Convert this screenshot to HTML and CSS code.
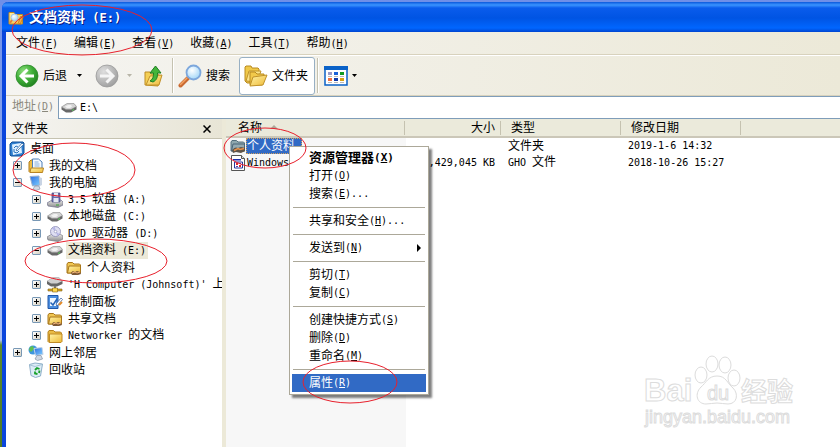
FILE: index.html
```html
<!DOCTYPE html>
<html lang="zh-CN">

<head>
    <meta charset="UTF-8">
    <title>文档资料 (E:)</title>
    <link rel="stylesheet" href="styles.css">
</head>

<body>
    <svg class="sprite" width="0" height="0" aria-hidden="true">
        <defs>
            <linearGradient id="yellow" x1="0" y1="0" x2="1" y2="1">
                <stop offset="0" stop-color="#fff3a6" />
                <stop offset="1" stop-color="#eeb937" />
            </linearGradient>
            <linearGradient id="metal" x1="0" y1="0" x2="0" y2="1">
                <stop offset="0" stop-color="#e8e8e8" />
                <stop offset="1" stop-color="#8a8a8a" />
            </linearGradient>
            <radialGradient id="green" cx="0.35" cy="0.3" r="0.8">
                <stop offset="0" stop-color="#8fe07e" />
                <stop offset="0.5" stop-color="#3fae38" />
                <stop offset="1" stop-color="#1c7a1c" />
            </radialGradient>
            <radialGradient id="grey" cx="0.35" cy="0.3" r="0.8">
                <stop offset="0" stop-color="#dedede" />
                <stop offset="1" stop-color="#9a9a9a" />
            </radialGradient>
            <radialGradient id="glass" cx="0.4" cy="0.35" r="0.7">
                <stop offset="0" stop-color="#ffffff" />
                <stop offset="1" stop-color="#9cd4f8" />
            </radialGradient>
            <linearGradient id="screen" x1="0" y1="0" x2="1" y2="1">
                <stop offset="0" stop-color="#2a6be0" />
                <stop offset="1" stop-color="#7fd0ff" />
            </linearGradient>
        </defs>
        <symbol id="folder" viewBox="0 0 16 16">
            <path d="M1 4 2 2.500h4.500L8 4h5.500l1 1v8.500l-1 1H2l-1-1z" fill="#e9bb45" stroke="#b5801d" />
            <path d="M2.500 6H15v7.500l-1 1H2.500z" fill="url(#yellow)" stroke="#c08a24" />
        </symbol>
        <symbol id="shared" viewBox="0 0 16 16">
            <path d="M1 4 2 2.500h4.500L8 4h5.500l1 1v8H1z" fill="#f0c652" stroke="#a9771c" />
            <path d="M3 6h11.500v7H1.500z" fill="url(#yellow)" stroke="#a9771c" />
            <path d="M5 13c1-2 2-2 4-1l2-1 3 1 1 2-3 1H6z" fill="#7a5634" />
            <path d="M6 13l3-1 2 1 3-1" fill="none" stroke="#f0b277" />
        </symbol>
        <symbol id="shared-selected" viewBox="0 0 16 16">
            <path d="M1 4 2 2.500h4.500L8 4h5.500l1 1v8H1z" fill="#8ea7ae" stroke="#54707e" />
            <path d="M3 6h11.500v7H1.500z" fill="#93aab2" stroke="#4b6578" />
            <path d="M2 12c3-3 4-3 6-2l3-1 4 1v3l-4 2-5-1-3 1z" fill="#5e5348" />
            <path d="M4 12.500l4-2 2 1 4-1" fill="none" stroke="#e8924c" stroke-width="1.500" />
        </symbol>
        <symbol id="search-folder" viewBox="0 0 16 16">
            <path d="M1 2.500h5l1 2h7.500V14H1z" fill="url(#yellow)" stroke="#c08a24" />
            <path d="M12 14.500l3.500-8h-3l-2 6z" fill="#f5b040" stroke="#c06a18" stroke-width=".7" />
            <circle cx="6.500" cy="7.500" r="3.500" fill="url(#glass)" stroke="#a8c4e0" />
            <path d="M4 10l-2 3" stroke="#e0853c" stroke-width="2" />
        </symbol>
        <symbol id="desktop" viewBox="0 0 16 16">
            <path d="M3 1h11l1 1v10l-3 3H2l-1-1V3z" fill="#2f7fd0" stroke="#124f95" />
            <path d="M3 3.500 12 2l1 10-9 2z" fill="#dff0ff" />
            <path d="M5 7l2-2 2 1M5 8v3l3 1 2-2" fill="none" stroke="#2b73bd" />
            <path d="M7 9l6-7 1.500 1.500L8 10z" fill="#f7fbff" stroke="#2d5e9b" stroke-width=".7" />
        </symbol>
        <symbol id="documents" viewBox="0 0 16 16">
            <path d="M1 4 3 2h3v12.500H2l-1-1z" fill="#efbd45" stroke="#b07c1c" />
            <path d="M4.500 1h6L14 4v8H4.500z" fill="#f5faff" stroke="#4d7fb8" />
            <path d="M6.500 4h4M6.500 6h5M6.500 8h5" stroke="#86aedb" />
            <path d="M3 10h12.500l-1 4.500H2z" fill="url(#yellow)" stroke="#b98423" />
        </symbol>
        <symbol id="computer" viewBox="0 0 16 16">
            <path d="M2 1.500 11 1l1 9-7.500 1z" fill="url(#screen)" stroke="#9ab0ce" />
            <path d="M11 2l3 1v7l-2 1z" fill="#c9d4e4" />
            <path d="M7 11h4l1 3-4 1.500L5 14z" fill="#d5dbe4" stroke="#8796aa" stroke-width=".7" />
        </symbol>
        <symbol id="floppy" viewBox="0 0 16 16">
            <path d="M0 11l5-3h9l2 2v3l-5 2.500L1 14z" fill="url(#metal)" stroke="#70708c" stroke-width=".7" />
            <path d="M5 1h8v9H5z" fill="#6a6eae" stroke="#464880" stroke-width=".7" />
            <path d="M7 1h4v3.500H7zM6.500 6h5v4h-5z" fill="#e4e7f3" />
            <path d="M9 13h3" stroke="#34a834" />
        </symbol>
        <symbol id="drive" viewBox="0 0 16 16">
            <path d="M.5 7.500 6 4h7l2.500 3v2.500L10 12.500H5L.5 9.500z" fill="#686868" />
            <path d="M.5 7 6 3.500h7l2.500 3L10 9.500H5z" fill="#d4d4d4" stroke="#888" stroke-width=".6" />
            <path d="M4 6.500 7 5h3l1 1.500L9 8H6z" fill="#f2f2f2" />
            <path d="M11 10.500l2-1" stroke="#55d055" />
        </symbol>
        <symbol id="dvd" viewBox="0 0 16 16">
            <path d="M0 11l5-3h8l3 2v3l-5 2.500L1 14z" fill="url(#metal)" stroke="#77777f" stroke-width=".7" />
            <circle cx="8.500" cy="5.500" r="5" fill="#dfdff2" stroke="#8a8ab4" stroke-width=".8" />
            <path d="M8.500 5.500 5 2.500l3-2zM8.500 5.500l4 2.500-2 2z" fill="#b5b5e6" />
            <circle cx="8.500" cy="5.500" r="1.300" fill="#fff" stroke="#8a8ab4" stroke-width=".6" />
        </symbol>
        <symbol id="net-drive" viewBox="0 0 16 16">
            <path d="M0 4 6 .5h6L15.500 4v3L10 9.500H4L0 7z" fill="#666" />
            <path d="M0 4 6 .5h6L15.500 4 10 6.500H4z" fill="#cfcfcf" />
            <path d="M7 9h2v3H7z" fill="#7a7a7a" />
            <path d="M1 12h14v2H1z" fill="#d9a820" stroke="#806018" stroke-width=".6" />
            <path d="M5.500 11h5v4h-5z" fill="#ffd84c" stroke="#806018" stroke-width=".6" />
        </symbol>
        <symbol id="control" viewBox="0 0 16 16">
            <path d="M1 1.500h10v13H1z" fill="#4c8fe0" stroke="#1f56a8" />
            <path d="M3 4h6v8H3z" fill="#eef6ff" />
            <path d="M3.500 8.500 6 11l4-6" fill="none" stroke="#2563b6" stroke-width="1.500" />
            <path d="M9 10l5-6 1.500 1.500L10 12z" fill="#fff" stroke="#2c569a" stroke-width=".7" />
            <path d="M12 11l3-3" stroke="#e38b2a" stroke-width="2" />
        </symbol>
        <symbol id="network" viewBox="0 0 16 16">
            <circle cx="5" cy="5" r="4.500" fill="#3c96dd" />
            <path d="M2 2l3-1 1 3-3 3-2-2z" fill="#5fc04e" />
            <path d="M6 3.500 14 2.500l1 7-7.500 1z" fill="url(#screen)" stroke="#c2d2e6" />
            <path d="M9 10.500h4l1.500 3.500-5 1.500L7 14z" fill="#cfd7e2" stroke="#8592a5" stroke-width=".7" />
        </symbol>
        <symbol id="recycle" viewBox="0 0 16 16">
            <path d="M1.500 2.500 7 1l7.500 1-2 12-5 1.500L3 13.500z" fill="#dcecf6" stroke="#8eafc8" />
            <path d="M2 3l5 1.500 7-2" fill="none" stroke="#a5c2d6" />
            <path d="M7 8l2-2 2.500 1M11.500 8.500 11 11M9.500 12 7 11.500V9.500" fill="none" stroke="#18a22c" stroke-width="1.800" />
        </symbol>
        <symbol id="ghost" viewBox="0 0 16 16">
            <path d="M1.500.5h10l3 3v12h-13z" fill="#fff" stroke="#555" />
            <path d="M11.500.5v3h3" fill="#ddd" stroke="#555" />
            <path d="M3 4h8v1.500H3z" fill="#1d2fa8" />
            <path d="M4.500 7h8v6h-8z" fill="#fff" stroke="#24369c" />
            <path d="M6 8h2v2H6zM9 10h2v2H9z" fill="#e2252c" />
            <path d="M9 8h2v1H9zM6 11h2v1H6z" fill="#5b3fa8" />
        </symbol>
        <symbol id="caret" viewBox="0 0 5 3">
            <path d="M0 0h5L2.500 3z" />
        </symbol>
    </svg>

    <div class="window">
        <header class="title-bar">
            <svg class="icon"><use href="#search-folder" /></svg>
            <h1>文档资料<span class="en"> (E:)</span></h1>
        </header>

        <nav class="menu-bar">
            <button>文件<span class="en">(<u>F</u>)</span></button>
            <button>编辑<span class="en">(<u>E</u>)</span></button>
            <button>查看<span class="en">(<u>V</u>)</span></button>
            <button>收藏<span class="en">(<u>A</u>)</span></button>
            <button>工具<span class="en">(<u>T</u>)</span></button>
            <button>帮助<span class="en">(<u>H</u>)</span></button>
        </nav>

        <div class="toolbar">
            <button class="tool back">
                <svg class="icon-large" viewBox="0 0 24 24">
                    <circle cx="12" cy="12" r="11" fill="url(#green)" stroke="#2c8a2a" stroke-width=".8" />
                    <path d="M12.500 5.500 6 12l6.500 6.500M6.500 12H19" fill="none" stroke="#fff" stroke-width="3" />
                </svg>
                后退
                <svg class="caret"><use href="#caret" /></svg>
            </button>
            <button class="tool forward" aria-label="前进" disabled>
                <svg class="icon-large" viewBox="0 0 24 24">
                    <circle cx="12" cy="12" r="11" fill="url(#grey)" stroke="#999" stroke-width=".8" />
                    <path d="M11.500 5.500 18 12l-6.500 6.500M17.500 12H5" fill="none" stroke="#f5f5f5" stroke-width="3" />
                </svg>
                <svg class="caret"><use href="#caret" /></svg>
            </button>
            <button class="tool up" aria-label="向上">
                <svg class="icon-large" viewBox="0 0 24 24">
                    <path d="M3 8h5l1 2h6l4 2-3 10-13-1z" fill="#f4cf55" stroke="#bd8c24" />
                    <path d="M4 21 8 12l12-1-3 10z" fill="url(#yellow)" stroke="#c2912b" />
                    <path d="M11 18c4-2 4.500-5 4.500-9H19L13.500 2 8 9h3.500c0 4-.5 6-3.500 8z" fill="#43b53b" stroke="#1f7e20" />
                </svg>
            </button>
            <span class="divider"></span>
            <button class="tool search">
                <svg class="icon-large" viewBox="0 0 24 24">
                    <path d="M10 14 2.500 21.500" stroke="#c96a32" stroke-width="4" stroke-linecap="round" />
                    <path d="M9 14 2.500 20.500" stroke="#f5a262" stroke-width="1.500" stroke-linecap="round" />
                    <circle cx="15.500" cy="8.500" r="7" fill="url(#glass)" stroke="#7da7dc" stroke-width="1.800" />
                </svg>
                搜索
            </button>
            <button class="tool folders pressed">
                <svg class="icon-large" viewBox="0 0 24 24">
                    <path d="M1 3l1-1h5l1 2h6l1 1v5l-5 9H3l-2-2z" fill="#f0c949" stroke="#b88a20" />
                    <path d="M2 17 5 7h12l-4 11z" fill="#fbe487" stroke="#c0922a" />
                    <path d="M6 21V8h5l2 2h7v3l-2 8z" fill="#f2c94a" stroke="#b88a20" />
                    <path d="M6 22 9 13l14-2-4 10z" fill="url(#yellow)" stroke="#c0922a" />
                </svg>
                文件夹
            </button>
            <span class="divider"></span>
            <button class="tool views" aria-label="查看">
                <svg class="icon-large" viewBox="0 0 24 24">
                    <path d="M1 3h22v18H1z" fill="#fff" stroke="#0a62c8" stroke-width="1.500" />
                    <path d="M0 2h24v4H0z" fill="#0a62c8" />
                    <path d="M4 8h4v3H4z" fill="#9a9ac8" />
                    <path d="M10 8h4v3h-4z" fill="#1a62d8" />
                    <path d="M16 8h4v3h-4z" fill="#109a20" />
                    <path d="M4 14h4v3H4z" fill="#f07040" />
                    <path d="M10 14h4v3h-4z" fill="#103aa8" />
                    <path d="M16 14h4v3h-4z" fill="#d8a010" />
                    <path d="M4 12.500h4m2 0h4m2 0h4M4 18.500h4m2 0h4m2 0h4" stroke="#b8b8b8" />
                </svg>
                <svg class="caret"><use href="#caret" /></svg>
            </button>
        </div>

        <div class="address-bar">
            <label for="address">地址<span class="en">(<u>D</u>)</span></label>
            <div class="address-box">
                <svg class="icon"><use href="#drive" /></svg>
                <input type="text" id="address" value="E:\">
            </div>
        </div>

        <div class="content">
            <aside class="sidebar">
                <div class="sidebar-header">
                    <h2>文件夹</h2>
                    <button class="close" aria-label="关闭">
                        <svg viewBox="0 0 8 8"><path d="M.5.5l7 7m0-7l-7 7" stroke="#000" stroke-width="1.500" /></svg>
                    </button>
                </div>
                <div class="tree">
                    <div class="node root"><svg class="icon"><use href="#desktop" /></svg><a href="#">桌面</a></div>
                    <ul>
                        <li>
                            <div class="node"><button class="expander plus" aria-label="展开"></button><svg class="icon"><use href="#documents" /></svg><a href="#">我的文档</a></div>
                        </li>
                        <li>
                            <div class="node"><button class="expander" aria-label="折叠"></button><svg class="icon"><use href="#computer" /></svg><a href="#">我的电脑</a></div>
                            <ul>
                                <li>
                                    <div class="node"><button class="expander plus" aria-label="展开"></button><svg class="icon"><use href="#floppy" /></svg><a href="#"><span class="en">3.5 </span>软盘<span class="en"> (A:)</span></a></div>
                                </li>
                                <li>
                                    <div class="node"><button class="expander plus" aria-label="展开"></button><svg class="icon"><use href="#drive" /></svg><a href="#">本地磁盘<span class="en"> (C:)</span></a></div>
                                </li>
                                <li>
                                    <div class="node"><button class="expander plus" aria-label="展开"></button><svg class="icon"><use href="#dvd" /></svg><a href="#"><span class="en">DVD </span>驱动器<span class="en"> (D:)</span></a></div>
                                </li>
                                <li>
                                    <div class="node"><button class="expander" aria-label="折叠"></button><svg class="icon"><use href="#drive" /></svg><a href="#" class="current">文档资料<span class="en"> (E:)</span></a></div>
                                    <ul>
                                        <li>
                                            <div class="node leaf"><svg class="icon"><use href="#shared" /></svg><a href="#">个人资料</a></div>
                                        </li>
                                    </ul>
                                </li>
                                <li>
                                    <div class="node"><button class="expander plus" aria-label="展开"></button><svg class="icon"><use href="#net-drive" /></svg><a href="#"><span class="en">'H Computer (Johnsoft)' </span>上</a></div>
                                </li>
                                <li>
                                    <div class="node"><button class="expander plus" aria-label="展开"></button><svg class="icon"><use href="#control" /></svg><a href="#">控制面板</a></div>
                                </li>
                                <li>
                                    <div class="node"><button class="expander plus" aria-label="展开"></button><svg class="icon"><use href="#shared" /></svg><a href="#">共享文档</a></div>
                                </li>
                                <li>
                                    <div class="node"><button class="expander plus" aria-label="展开"></button><svg class="icon"><use href="#folder" /></svg><a href="#"><span class="en">Networker </span>的文档</a></div>
                                </li>
                            </ul>
                        </li>
                        <li>
                            <div class="node"><button class="expander plus" aria-label="展开"></button><svg class="icon"><use href="#network" /></svg><a href="#">网上邻居</a></div>
                        </li>
                        <li>
                            <div class="node leaf"><svg class="icon"><use href="#recycle" /></svg><a href="#">回收站</a></div>
                        </li>
                    </ul>
                </div>
            </aside>

            <main class="file-pane">
                <table>
                    <thead>
                        <tr>
                            <th class="name">名称<svg class="sort" viewBox="0 0 8 4"><path d="M0 4 4 0l4 4z" fill="#aca899" /></svg></th>
                            <th class="size">大小</th>
                            <th class="type">类型</th>
                            <th class="date">修改日期</th>
                            <th></th>
                        </tr>
                    </thead>
                    <tbody>
                        <tr>
                            <td><div class="file"><svg class="icon"><use href="#shared-selected" /></svg><a href="#" class="selected">个人资料</a></div></td>
                            <td class="size"></td>
                            <td>文件夹</td>
                            <td class="en">2019-1-6 14:32</td>
                            <td></td>
                        </tr>
                        <tr>
                            <td><div class="file"><svg class="icon"><use href="#ghost" /></svg><a href="#" class="en">Windows</a></div></td>
                            <td class="size en">1,429,045 KB</td>
                            <td><span class="en">GHO </span>文件</td>
                            <td class="en">2018-10-26 15:27</td>
                            <td></td>
                        </tr>
                    </tbody>
                </table>
            </main>
        </div>
    </div>

    <div class="context-menu" role="menu">
        <button class="default" role="menuitem">资源管理器<span class="en">(<u>X</u>)</span></button>
        <button role="menuitem">打开<span class="en">(<u>O</u>)</span></button>
        <button role="menuitem">搜索<span class="en">(<u>E</u>)...</span></button>
        <hr>
        <button role="menuitem">共享和安全<span class="en">(<u>H</u>)...</span></button>
        <hr>
        <button role="menuitem">发送到<span class="en">(<u>N</u>)</span><svg class="submenu" viewBox="0 0 4 8"><path d="M0 0l4 4-4 4z" /></svg></button>
        <hr>
        <button role="menuitem">剪切<span class="en">(<u>T</u>)</span></button>
        <button role="menuitem">复制<span class="en">(<u>C</u>)</span></button>
        <hr>
        <button role="menuitem">创建快捷方式<span class="en">(<u>S</u>)</span></button>
        <button role="menuitem">删除<span class="en">(<u>D</u>)</span></button>
        <button role="menuitem">重命名<span class="en">(<u>M</u>)</span></button>
        <hr>
        <button class="active" role="menuitem">属性<span class="en">(<u>R</u>)</span></button>
    </div>

    <svg class="marks" width="420" height="410" aria-hidden="true">
        <ellipse cx="82" cy="30" rx="70" ry="25" />
        <ellipse cx="74" cy="170" rx="61" ry="27" />
        <ellipse cx="96" cy="261" rx="71" ry="22" />
        <ellipse cx="265" cy="148" rx="41" ry="20" />
        <ellipse cx="350" cy="382" rx="47" ry="21" />
    </svg>

    <svg class="watermark" viewBox="0 0 160 80">
        <text class="brand" x="1" y="51">Bai</text>
        <ellipse cx="58" cy="25" rx="6" ry="8" />
        <ellipse cx="69" cy="14" rx="6" ry="8" />
        <ellipse cx="82" cy="15" rx="6" ry="8" />
        <ellipse cx="91" cy="28" rx="6" ry="8" />
        <path d="M74 26c9 0 10 7 16 12 6 6 4 16-5 16-4 0-7-1-11-1s-7 1-11 1c-9 0-12-10-5-17 5-4 7-11 16-11z" />
        <text class="du" x="64" y="50">du</text>
        <text class="cn" x="98" y="51">经验</text>
        <text class="site" x="2" y="73">jingyan.baidu.com</text>
    </svg>
</body>

</html>
```
FILE: styles.css
```css
* {
    box-sizing: border-box;
}

body {
    margin: 0;
    min-height: 100vh;
    overflow: hidden;
    position: relative;
    padding: 2px 0 0 2px;
    background: linear-gradient(#6f8fe8, #a9bff5 340px, #5c8a2c 345px, #4e7a24);
    color: #000;
    font-family: "Liberation Serif", "Noto Sans CJK SC", serif;
    font-size: 12px;
    line-height: 16px;
}

h1,
h2,
ul {
    margin: 0;
    padding: 0;
}

button,
input {
    margin: 0;
    padding: 0;
    border: none;
    background: none;
    color: inherit;
    font: inherit;
}

a {
    color: inherit;
    text-decoration: none;
}

u {
    text-underline-offset: 1px;
}

.sprite {
    position: absolute;
}

.en {
    font-family: "DejaVu Sans Mono", monospace;
    font-size: 10px;
    white-space: pre;
}

.icon {
    width: 16px;
    height: 16px;
    flex: none;
}

.icon-large {
    width: 24px;
    height: 24px;
    flex: none;
}

.window {
    display: flex;
    flex-direction: column;
    height: calc(100vh - 2px);
    border-left: 4px solid #0a45dc;
    border-top-left-radius: 6px;
    background-color: #ece9d8;
}

/* title and menus */
.title-bar {
    display: flex;
    align-items: center;
    gap: 5px;
    height: 30px;
    padding: 2px 2px 0 6px;
    margin-left: -4px;
    border-top-left-radius: 6px;
    background: linear-gradient(#0a58dc, #3a94ff 3px, #0a5cec 6px, #0054e3 16px, #0066ff 26px, #0045d0);
    color: #fff;
}

.title-bar h1 {
    font-size: 14px;
    line-height: 18px;
    text-shadow: 1px 1px #0a1883;
}

.title-bar .en {
    font-size: 12px;
}

.menu-bar {
    display: flex;
    height: 23px;
    padding-left: 2px;
    background: linear-gradient(to right, #f5f4f1, #ece9d8);
    border-bottom: 1px solid #d8d2bd;
}

.menu-bar button {
    padding: 0 8px;
}

.toolbar {
    display: flex;
    align-items: center;
    height: 41px;
    padding-left: 9px;
    background: linear-gradient(to right, #f5f4f1, #ece9d8);
    border-top: 1px solid #fff;
    border-bottom: 1px solid #d8d2bd;
}

.tool {
    display: flex;
    align-items: center;
    gap: 4px;
    height: 38px;
}

.caret {
    width: 5px;
    height: 3px;
}

.back {
    margin-right: 13px;
}

.back .caret {
    margin-left: 6px;
}

.forward {
    gap: 8px;
    margin-right: 10px;
    fill: #b8b5a8;
}

.divider {
    width: 2px;
    height: 35px;
    border-left: 1px solid #c5c2b0;
    border-right: 1px solid #fff;
}

.up {
    margin-right: 6px;
}

.search {
    margin: 0 9px 0 4px;
}

.folders {
    padding: 0 6px 0 4px;
    margin-right: 2px;
}

.pressed {
    border: 1px solid #98b0c4;
    border-radius: 3px;
    background-color: #fff;
}

.views {
    margin-left: 5px;
}

.address-bar {
    display: flex;
    height: 23px;
    background: linear-gradient(to right, #f5f4f1, #ece9d8);
}

.address-bar label {
    width: 52px;
    padding: 2px 0 0 6px;
    color: #8a887c;
}

.address-box {
    display: flex;
    flex: 1;
    align-items: center;
    gap: 3px;
    padding-left: 2px;
    border: 1px solid #7f9db9;
    border-right: none;
    background-color: #fff;
}

.address-box input {
    flex: 1;
    font-family: "DejaVu Sans Mono", monospace;
    font-size: 10px;
}

.content {
    display: flex;
    flex: 1;
    min-height: 0;
}

/* folder tree */
.sidebar {
    display: flex;
    flex-direction: column;
    flex: 0 0 220px;
    min-width: 0;
    border-right: 4px solid #ece9d8;
}

.sidebar-header {
    display: flex;
    align-items: center;
    justify-content: space-between;
    height: 20px;
    padding: 0 11px 0 6px;
    background: linear-gradient(to right, #f5f4f1, #e8e5d6);
    border-bottom: 1px solid #c5c2b0;
}

.sidebar-header h2 {
    font-size: 12px;
    font-weight: normal;
}

.close svg {
    display: block;
    width: 8px;
    height: 8px;
}

.tree {
    flex: 1;
    padding: 1px 0 0 7px;
    overflow: hidden;
    background-color: #fff;
}

.tree ul {
    list-style: none;
}

.tree ul ul {
    padding-left: 19px;
}

.node {
    display: flex;
    align-items: center;
    height: 17px;
    white-space: nowrap;
}

.node.root {
    margin-left: -4px;
}

.node.leaf {
    padding-left: 15px;
}

.node a {
    margin-left: 3px;
    padding: 0 2px;
}

.node .current {
    background-color: #ece9d8;
}

.expander {
    width: 9px;
    height: 9px;
    margin-right: 6px;
    flex: none;
    border: 1px solid #7898b5;
    border-radius: 1px;
    background: linear-gradient(#000, #000) center / 5px 1px no-repeat, linear-gradient(135deg, #fff, #d5d0c2);
}

.expander.plus {
    background: linear-gradient(#000, #000) center / 5px 1px no-repeat, linear-gradient(#000, #000) center / 1px 5px no-repeat, linear-gradient(135deg, #fff, #d5d0c2);
}

/* file list */
.file-pane {
    flex: 1;
    min-width: 0;
    background: linear-gradient(to right, #f7f7f7 180px, #fff 180px);
}

table {
    width: 100%;
    table-layout: fixed;
    border-collapse: collapse;
}

th {
    height: 18px;
    padding: 0 5px 0 9px;
    border-bottom: 2px solid #cbc7b8;
    background: linear-gradient(#c5c2b0, #c5c2b0) right 1px center / 1px 14px no-repeat #ebeadb;
    font-weight: normal;
    text-align: left;
    line-height: 16px;
}

th:last-child {
    background: #ebeadb;
}

th.name {
    width: 180px;
    padding-left: 12px;
}

th.size {
    width: 96px;
}

th.type,
th.date {
    width: 120px;
}

.sort {
    width: 8px;
    height: 4px;
    margin: 0 0 3px 8px;
}

td {
    height: 17px;
    padding: 0 6px;
    line-height: 16px;
}

td:first-child {
    padding: 0 4px;
}

th.size,
td.size {
    padding-right: 7px;
    text-align: right;
}

.file {
    display: flex;
    align-items: center;
}

.file a {
    padding: 0 1px;
}

.selected {
    width: 56px;
    background-color: #316ac5;
    color: #fff;
    outline: 1px dotted #d0a060;
    outline-offset: -1px;
}

/* right-click menu */
.context-menu {
    position: absolute;
    left: 289px;
    top: 146px;
    width: 140px;
    padding: 2px;
    border: 1px solid #aca899;
    background-color: #fff;
    box-shadow: 3px 3px 2px rgba(0, 0, 0, 0.5);
}

.context-menu button {
    display: flex;
    align-items: center;
    width: 100%;
    height: 18px;
    padding: 0 5px 0 17px;
}

.context-menu hr {
    height: 1px;
    margin: 4px 1px;
    border: none;
    background-color: #aca899;
}

.context-menu .default {
    font-size: 13px;
    font-weight: bold;
}

.default .en {
    font-size: 11px;
}

.submenu {
    width: 4px;
    height: 8px;
    margin-left: auto;
}

.context-menu .active {
    background-color: #316ac5;
    color: #fff;
}

.marks {
    position: absolute;
    left: 0;
    top: 0;
    pointer-events: none;
    fill: none;
    stroke: #e8202c;
}

.watermark {
    position: absolute;
    right: 37px;
    bottom: 17px;
    width: 160px;
    height: 80px;
    overflow: visible;
    fill: #fff;
    stroke: #dcdcdc;
    font-family: "Liberation Sans", "Noto Sans CJK SC", sans-serif;
}

.brand {
    font-size: 31px;
    font-weight: bold;
}

.du {
    font-size: 20px;
}

.cn {
    font-size: 26px;
    font-weight: bold;
}

.site {
    font-size: 18px;
}
```
